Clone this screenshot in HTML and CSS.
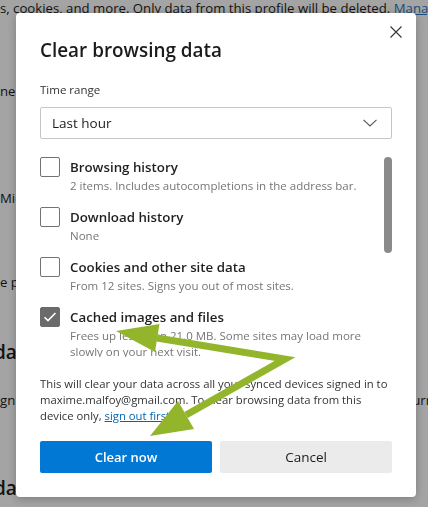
FILE: index.html
```html
<!DOCTYPE html>
<html lang="en">
<head>
  <meta charset="UTF-8">
  <meta name="viewport" content="width=device-width, initial-scale=1.0">
  <title>Clear browsing data</title>
  <link rel="stylesheet" href="styles.css">
</head>
<body>
  <div class="page">
    <p class="page-line first">s, cookies, and more. Only data from this profile will be deleted. <a href="#">Manage your profiles</a></p>
    <p class="page-line gap-a">ne you close the browser</p>
    <p class="page-line gap-b">Microsoft Edge</p>
    <p class="page-line gap-c">e privacy settings</p>
    <h2 class="page-heading gap-d">data collection</h2>
    <div class="page-line split gap-e">
      <span>gn in to sync</span>
      <span>Turn on</span>
    </div>
    <h2 class="page-heading gap-f">data</h2>
  </div>

  <div class="overlay">
    <div class="dialog">
      <div class="dialog-head">
        <h1 class="dialog-title">Clear browsing data</h1>
        <button class="close" aria-label="Close">
          <svg width="12" height="12" viewBox="0 0 12 12"><path d="M0.5 0.5 L11.5 11.5 M11.5 0.5 L0.5 11.5" stroke="#333" stroke-width="1.1" fill="none"/></svg>
        </button>
      </div>

      <div class="field-label">Time range</div>
      <div class="select">
        <span>Last hour</span>
        <svg width="14" height="8" viewBox="0 0 14 8"><path d="M0.5 0.8 L7 7 L13.5 0.8" stroke="#555" stroke-width="1.1" fill="none"/></svg>
      </div>

      <div class="options">
        <ul class="option-list">
          <li class="option">
            <span class="checkbox"></span>
            <div>
              <div class="option-title">Browsing history</div>
              <div class="option-desc">2 items. Includes autocompletions in the address bar.</div>
            </div>
          </li>
          <li class="option">
            <span class="checkbox"></span>
            <div>
              <div class="option-title">Download history</div>
              <div class="option-desc">None</div>
            </div>
          </li>
          <li class="option">
            <span class="checkbox"></span>
            <div>
              <div class="option-title">Cookies and other site data</div>
              <div class="option-desc">From 12 sites. Signs you out of most sites.</div>
            </div>
          </li>
          <li class="option">
            <span class="checkbox checked">
              <svg width="14" height="12" viewBox="0 0 14 12"><path d="M1.5 6.2 L5 9.6 L12.5 2" stroke="#fff" stroke-width="1.6" fill="none"/></svg>
            </span>
            <div>
              <div class="option-title">Cached images and files</div>
              <div class="option-desc">Frees up less than 21.0 MB. Some sites may load more slowly on your next visit.</div>
            </div>
          </li>
          <li class="option">
            <span class="checkbox"></span>
            <div>
              <div class="option-title">Passwords</div>
              <div class="option-desc">None</div>
            </div>
          </li>
        </ul>
        <div class="scroll-track"><div class="scroll-thumb"></div></div>
      </div>

      <p class="sync-note">This will clear your data across all your synced devices signed in to maxime.malfoy@gmail.com. To clear browsing data from this device only, <a href="#">sign out first</a>.</p>

      <div class="actions">
        <button class="btn primary">Clear now</button>
        <button class="btn">Cancel</button>
      </div>
    </div>
  </div>

  <svg class="annotation" viewBox="0 0 428 507" width="428" height="507">
    <polyline points="157,338 285,359 186,415" fill="none" stroke="#93b52b" stroke-width="7" stroke-linejoin="miter"/>
    <polygon points="116,331 159.5,324 155,352" fill="#93b52b"/>
    <polygon points="150,436 194,429 178,401" fill="#93b52b"/>
  </svg>
</body>
</html>
```

FILE: styles.css
```css
body {
  margin: 0;
  font-family: "Segoe UI", "Open Sans", sans-serif;
  color: #1b1b1b;
  overflow: hidden;
}

.page {
  height: 507px;
  background: #f5f5f5;
  display: flex;
  flex-direction: column;
  overflow: hidden;
}

.page-line {
  margin: 0;
  font-size: 13.2px;
  line-height: 20px;
  white-space: nowrap;
}

.page-line a {
  color: #2b73b8;
}

.page-heading {
  margin: 0 0 0 -6px;
  font-size: 19px;
  font-weight: 600;
  line-height: 28px;
  white-space: nowrap;
}

.first { margin-top: -2px; }
.gap-a { margin-top: 63px; }
.gap-b { margin-top: 87px; }
.gap-c { margin-top: 64px; }
.gap-d { margin-top: 46px; }
.gap-e { margin-top: 24px; }
.gap-f { margin-top: 64px; }

.split {
  display: grid;
  grid-template-columns: 405px auto;
}

.overlay {
  position: fixed;
  inset: 0;
  background: rgba(0, 0, 0, 0.33);
}

.dialog {
  margin: 13px 0 0 16px;
  width: 400px;
  height: 484px;
  box-sizing: border-box;
  padding: 9px 24px 24px;
  background: #fff;
  border-radius: 4px;
  box-shadow: 0 2px 10px rgba(0, 0, 0, 0.25);
  display: flex;
  flex-direction: column;
}

.dialog-head {
  display: flex;
  justify-content: space-between;
  align-items: flex-start;
  margin-right: -14px;
}

.dialog-title {
  margin: 14px 0 0;
  font-size: 18.9px;
  font-weight: 600;
  line-height: 28px;
}

.close {
  width: 20px;
  height: 20px;
  padding: 0;
  border: none;
  background: none;
  display: flex;
  align-items: center;
  justify-content: center;
}

.field-label {
  margin-top: 17px;
  font-size: 11.5px;
  line-height: 18px;
  color: #333;
}

.select {
  margin-top: 8px;
  height: 32px;
  box-sizing: border-box;
  border: 1px solid #c6c6c6;
  border-radius: 2px;
  padding: 0 14px 0 11px;
  display: flex;
  align-items: center;
  justify-content: space-between;
  font-size: 13.5px;
}

.options {
  margin-top: 8px;
  height: 210px;
  display: flex;
  overflow: hidden;
}

.option-list {
  flex: 1;
  margin: 0;
  padding: 10px 0 0;
  list-style: none;
}

.option {
  display: flex;
  gap: 10px;
  margin-bottom: 13px;
}

.checkbox {
  flex: none;
  width: 20px;
  height: 20px;
  box-sizing: border-box;
  border: 1px solid #737373;
  border-radius: 2px;
  display: flex;
  align-items: center;
  justify-content: center;
}

.checkbox.checked {
  background: #6b6b6b;
  border-color: #6b6b6b;
}

.option-title {
  font-size: 13.3px;
  font-weight: 600;
  line-height: 21px;
  color: #1f1f1f;
}

.option-desc {
  font-size: 11.5px;
  line-height: 16px;
  color: #767676;
  max-width: 305px;
}

.scroll-track {
  flex: none;
  width: 8px;
  padding-top: 10px;
}

.scroll-thumb {
  height: 96px;
  border-radius: 4px;
  background: #8a8a8a;
}

.sync-note {
  margin: 19px 0 0;
  font-size: 11.3px;
  line-height: 16px;
  color: #333;
}

.sync-note a {
  color: #0066b4;
}

.actions {
  margin-top: 17px;
  display: flex;
  gap: 8px;
}

.btn {
  flex: 1;
  height: 32px;
  border: none;
  border-radius: 2px;
  background: #ebebeb;
  color: #1b1b1b;
  font-family: inherit;
  font-size: 13.5px;
}

.btn.primary {
  background: #0078d4;
  color: #fff;
  font-weight: 600;
  font-size: 13px;
}

.annotation {
  position: fixed;
  top: 0;
  left: 0;
  pointer-events: none;
}
```
